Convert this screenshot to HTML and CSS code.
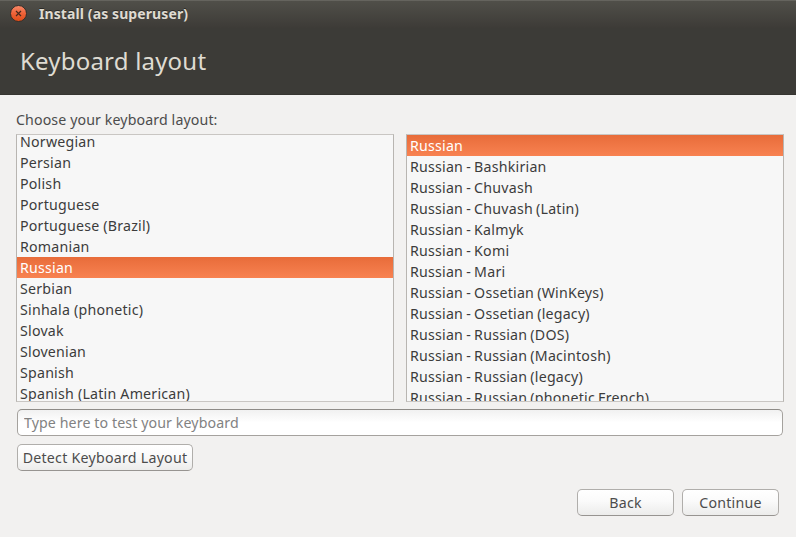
FILE: index.html
```html
<!DOCTYPE html>
<html lang="en">
<head>
<meta charset="utf-8">
<title>Install (as superuser)</title>
<link rel="stylesheet" href="styles.css">
</head>
<body>
<header class="titlebar">
  <svg class="close" width="18" height="18" viewBox="0 0 18 18" aria-label="Close">
    <defs><linearGradient id="g" x1="0" y1="0" x2="0" y2="1"><stop offset="0" stop-color="#f88b6b"/><stop offset=".5" stop-color="#ee6238"/><stop offset="1" stop-color="#df4b16"/></linearGradient></defs>
    <circle cx="8.5" cy="8.5" r="8" fill="url(#g)" stroke="#302e2a" stroke-width="1"/>
    <path d="M6 6L11 11M11 6L6 11" stroke="#46291c" stroke-width="1.2"/>
  </svg>
  <span class="window-title">Install (as superuser)</span>
</header>
<div class="heading"><h1>Keyboard layout</h1></div>
<main class="content">
  <label class="prompt">Choose your keyboard layout:</label>
  <div class="lists">
    <ul class="list scrolled">
      <li>Norwegian</li><li>Persian</li><li>Polish</li><li>Portuguese</li><li>Portuguese (Brazil)</li><li>Romanian</li><li class="selected">Russian</li><li>Serbian</li><li>Sinhala (phonetic)</li><li>Slovak</li><li>Slovenian</li><li>Spanish</li><li>Spanish (Latin American)</li>
    </ul>
    <ul class="list variants">
      <li class="selected">Russian</li><li>Russian - Bashkirian</li><li>Russian - Chuvash</li><li>Russian - Chuvash (Latin)</li><li>Russian - Kalmyk</li><li>Russian - Komi</li><li>Russian - Mari</li><li>Russian - Ossetian (WinKeys)</li><li>Russian - Ossetian (legacy)</li><li>Russian - Russian (DOS)</li><li>Russian - Russian (Macintosh)</li><li>Russian - Russian (legacy)</li><li>Russian - Russian (phonetic French)</li>
    </ul>
  </div>
  <input class="entry" type="text" placeholder="Type here to test your keyboard">
  <button class="button detect">Detect Keyboard Layout</button>
  <div class="actions">
    <button class="button">Back</button>
    <button class="button">Continue</button>
  </div>
</main>
</body>
</html>
```
FILE: styles.css
```css
* { box-sizing: border-box; }
body {
  margin: 0;
  height: 537px;
  overflow: hidden;
  background: #f2f1f0;
  color: #3c3c3c;
  font: 14.2px/21px "Noto Sans", "Open Sans", sans-serif;
}
.titlebar {
  display: flex;
  align-items: center;
  height: 28px;
  padding: 0 0 2px 10px;
  border-top: 1px solid #65645e;
  background: linear-gradient(#504f49, #3d3b37);
}
.close { flex: none; }
.window-title {
  margin-left: 11px;
  color: #dfdbd2;
  font-size: 14px;
  font-weight: 700;
  line-height: 20px;
  letter-spacing: 0.1px;
  text-shadow: 0 -1px #2b2a27;
}
.heading {
  display: flex;
  align-items: center;
  height: 67px;
  padding-left: 20px;
  background: #3c3b37;
  border-bottom: 1px solid #363531;
}
h1 {
  margin: 0;
  color: #dfdbd2;
  font-size: 24px;
  font-weight: 400;
  line-height: 32px;
  letter-spacing: 0.2px;
}
.content {
  display: flex;
  flex-direction: column;
  padding: 14px 12px 0 16px;
}
.prompt { height: 25px; color: #4c4c4c; letter-spacing: 0.11px; }
.lists {
  display: grid;
  grid-template-columns: 378px 378px;
  column-gap: 12px;
}
.list {
  height: 268px;
  margin: 0;
  padding: 0;
  overflow: hidden;
  list-style: none;
  background: #f7f7f7;
  border: 1px solid #b8b5b1;
  border-top-color: #c9c6c3;
  border-bottom-color: #c9c6c3;
  letter-spacing: 0.22px;
}
.variants { word-spacing: -0.8px; }
.list li { height: 21px; padding-left: 3px; white-space: nowrap; }
.scrolled li:first-child { margin-top: -4px; }
.list .selected {
  color: #fff;
  background: linear-gradient(#e86c3a, #f88251);
}
.entry {
  width: 766px;
  height: 27px;
  margin: 7px 0 8px 1px;
  padding: 0 6px;
  border: 1px solid #a5a29e;
  border-top-color: #8e8b87;
  border-radius: 5px;
  background: linear-gradient(#f1f1f1, #fff 50%);
  font: inherit;
  letter-spacing: 0.1px;
}
.entry::placeholder { color: #828282; opacity: 1; }
.button {
  width: 97px;
  height: 27px;
  padding: 0;
  border: 1px solid #b0aeab;
  border-bottom-color: #979491;
  border-radius: 5px;
  background: linear-gradient(#fff, #fafafa 45%, #ececeb);
  color: #4c4c4c;
  font: inherit;
  letter-spacing: 0.25px;
}
.detect { width: 176px; margin-left: 1px; }
.actions {
  display: flex;
  justify-content: flex-end;
  gap: 8px;
  margin: 18px 5px 0 0;
}
```
